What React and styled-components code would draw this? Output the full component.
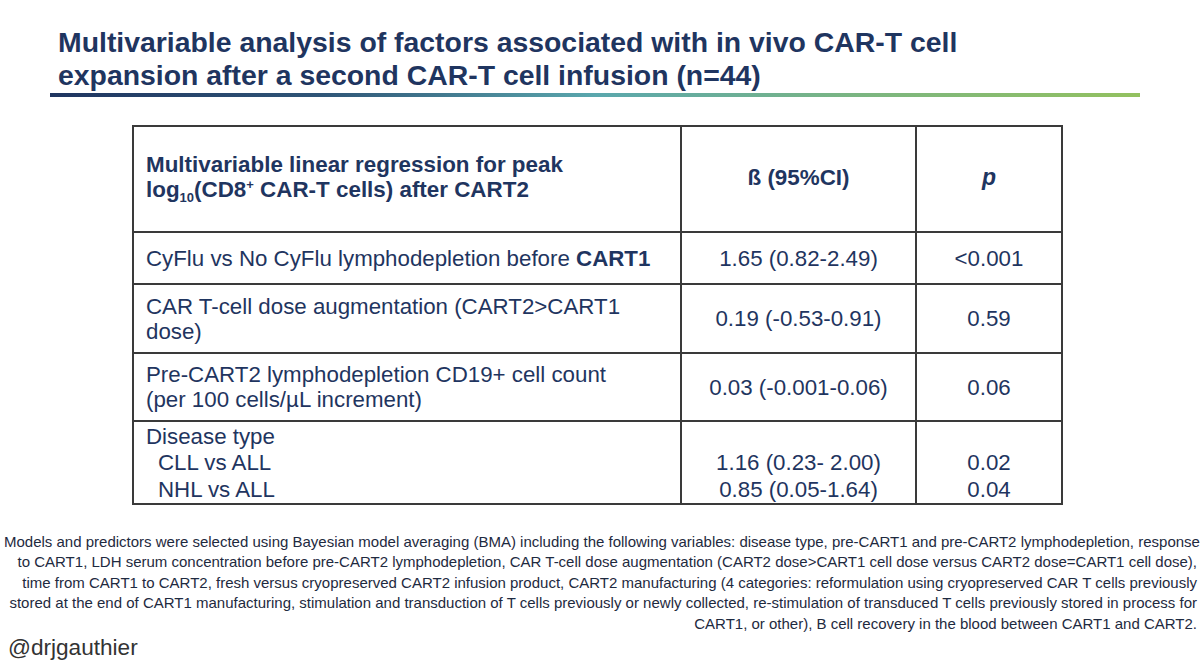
import React from "react";
import styled, { createGlobalStyle } from "styled-components";

const GlobalStyle = createGlobalStyle`
  html, body {
    margin: 0;
    padding: 0;
    background: #ffffff;
  }
  body {
    font-family: "Liberation Sans", Arial, sans-serif;
  }
`;

const Slide = styled.div`
  width: 1200px;
  height: 663px;
  overflow: hidden;
  display: flex;
  flex-direction: column;
  background: #fff;

  & > * {
    flex-shrink: 0;
  }
`;

const Title = styled.h1`
  margin: 0;
  padding: 26px 0 0 58px;
  font-size: 28.4px;
  line-height: 33px;
  font-weight: 700;
  color: #1f3560;
`;

const TitleRule = styled.div`
  margin: 1px 0 0 50px;
  width: 1090px;
  height: 4px;
  background: linear-gradient(
    to right,
    #1f3560 0%,
    #2f5577 25%,
    #5aa7ad 50%,
    #7cb680 75%,
    #93c15f 100%
  );
`;

const Table = styled.table`
  margin: 28px 0 0 132px;
  width: 929px;
  border-collapse: collapse;
  table-layout: fixed;
  color: #1f3560;
`;

const Row = styled.tr`
  height: ${({ $h }) => $h}px;
`;

const HeadCell = styled.th`
  border: 2px solid #3a3a3a;
  line-height: 25px;
  font-weight: 700;
  text-align: ${({ $left }) => ($left ? "left" : "center")};
  padding: 0 12px 4px;
  font-style: ${({ $italic }) => ($italic ? "italic" : "normal")};
  font-size: ${({ $big }) => ($big ? "23px" : "22.4px")};
`;

const Small = styled.span`
  font-size: 13px;
  vertical-align: ${({ $up }) => ($up ? "super" : "sub")};
  line-height: 0;
`;

const Cell = styled.td`
  border: 2px solid #3a3a3a;
  font-size: 22.3px;
  line-height: 25px;
  text-align: ${({ $left }) => ($left ? "left" : "center")};
  vertical-align: ${({ $bottom }) => ($bottom ? "bottom" : "middle")};
  padding: ${({ $tight }) => ($tight ? "2px 12px 0" : "0 12px")};
  white-space: nowrap;
`;

const Stack = styled.div`
  display: flex;
  flex-direction: column;
  line-height: 26.3px;
`;

const Sub = styled.span`
  padding-left: 12px;
`;

const Footnote = styled.p`
  margin: 27px 0 0;
  padding: 0 3px 0 4px;
  font-size: 15px;
  line-height: 20.5px;
  text-align: right;
  color: #1e2a40;
  white-space: nowrap;
`;

const Handle = styled.div`
  margin: 1px 0 0 8px;
  font-size: 22.6px;
  line-height: 26px;
  color: #333;
`;

export default function App() {
  return (
    <>
      <GlobalStyle />
      <Slide>
        <Title>
          Multivariable analysis of factors associated with in vivo CAR-T cell
          <br />
          expansion after a second CAR-T cell infusion (n=44)
        </Title>
        <TitleRule />
        <Table>
          <colgroup>
            <col style={{ width: 548 }} />
            <col style={{ width: 235 }} />
            <col style={{ width: 146 }} />
          </colgroup>
          <thead>
            <Row $h={106}>
              <HeadCell $left>
                Multivariable linear regression for peak
                <br />
                log<Small>10</Small>(CD8<Small $up>+</Small> CAR-T cells) after CART2
              </HeadCell>
              <HeadCell>ß (95%CI)</HeadCell>
              <HeadCell $italic $big>p</HeadCell>
            </Row>
          </thead>
          <tbody>
            <Row $h={52}>
              <Cell $left>
                CyFlu vs No CyFlu lymphodepletion before <b>CART1</b>
              </Cell>
              <Cell>1.65 (0.82-2.49)</Cell>
              <Cell>&lt;0.001</Cell>
            </Row>
            <Row $h={69}>
              <Cell $left>
                CAR T-cell dose augmentation (CART2&gt;CART1
                <br />
                dose)
              </Cell>
              <Cell>0.19 (-0.53-0.91)</Cell>
              <Cell>0.59</Cell>
            </Row>
            <Row $h={68}>
              <Cell $left>
                Pre-CART2 lymphodepletion CD19+ cell count
                <br />
                (per 100 cells/µL increment)
              </Cell>
              <Cell>0.03 (-0.001-0.06)</Cell>
              <Cell>0.06</Cell>
            </Row>
            <Row $h={80}>
              <Cell $left $tight>
                <Stack>
                  <span>Disease type</span>
                  <Sub>CLL vs ALL</Sub>
                  <Sub>NHL vs ALL</Sub>
                </Stack>
              </Cell>
              <Cell $bottom $tight>
                <Stack>
                  <span>1.16 (0.23- 2.00)</span>
                  <span>0.85 (0.05-1.64)</span>
                </Stack>
              </Cell>
              <Cell $bottom $tight>
                <Stack>
                  <span>0.02</span>
                  <span>0.04</span>
                </Stack>
              </Cell>
            </Row>
          </tbody>
        </Table>
        <Footnote>
          Models and predictors were selected using Bayesian model averaging (BMA) including the following variables: disease type, pre-CART1 and pre-CART2 lymphodepletion, response
          <br />
          to CART1, LDH serum concentration before pre-CART2 lymphodepletion, CAR T-cell dose augmentation (CART2 dose&gt;CART1 cell dose versus CART2 dose=CART1 cell dose),
          <br />
          time from CART1 to CART2, fresh versus cryopreserved CART2 infusion product, CART2 manufacturing (4 categories: reformulation using cryopreserved CAR T cells previously
          <br />
          stored at the end of CART1 manufacturing, stimulation and transduction of T cells previously or newly collected, re-stimulation of transduced T cells previously stored in process for
          <br />
          CART1, or other), B cell recovery in the blood between CART1 and CART2.
        </Footnote>
        <Handle>@drjgauthier</Handle>
      </Slide>
    </>
  );
}
